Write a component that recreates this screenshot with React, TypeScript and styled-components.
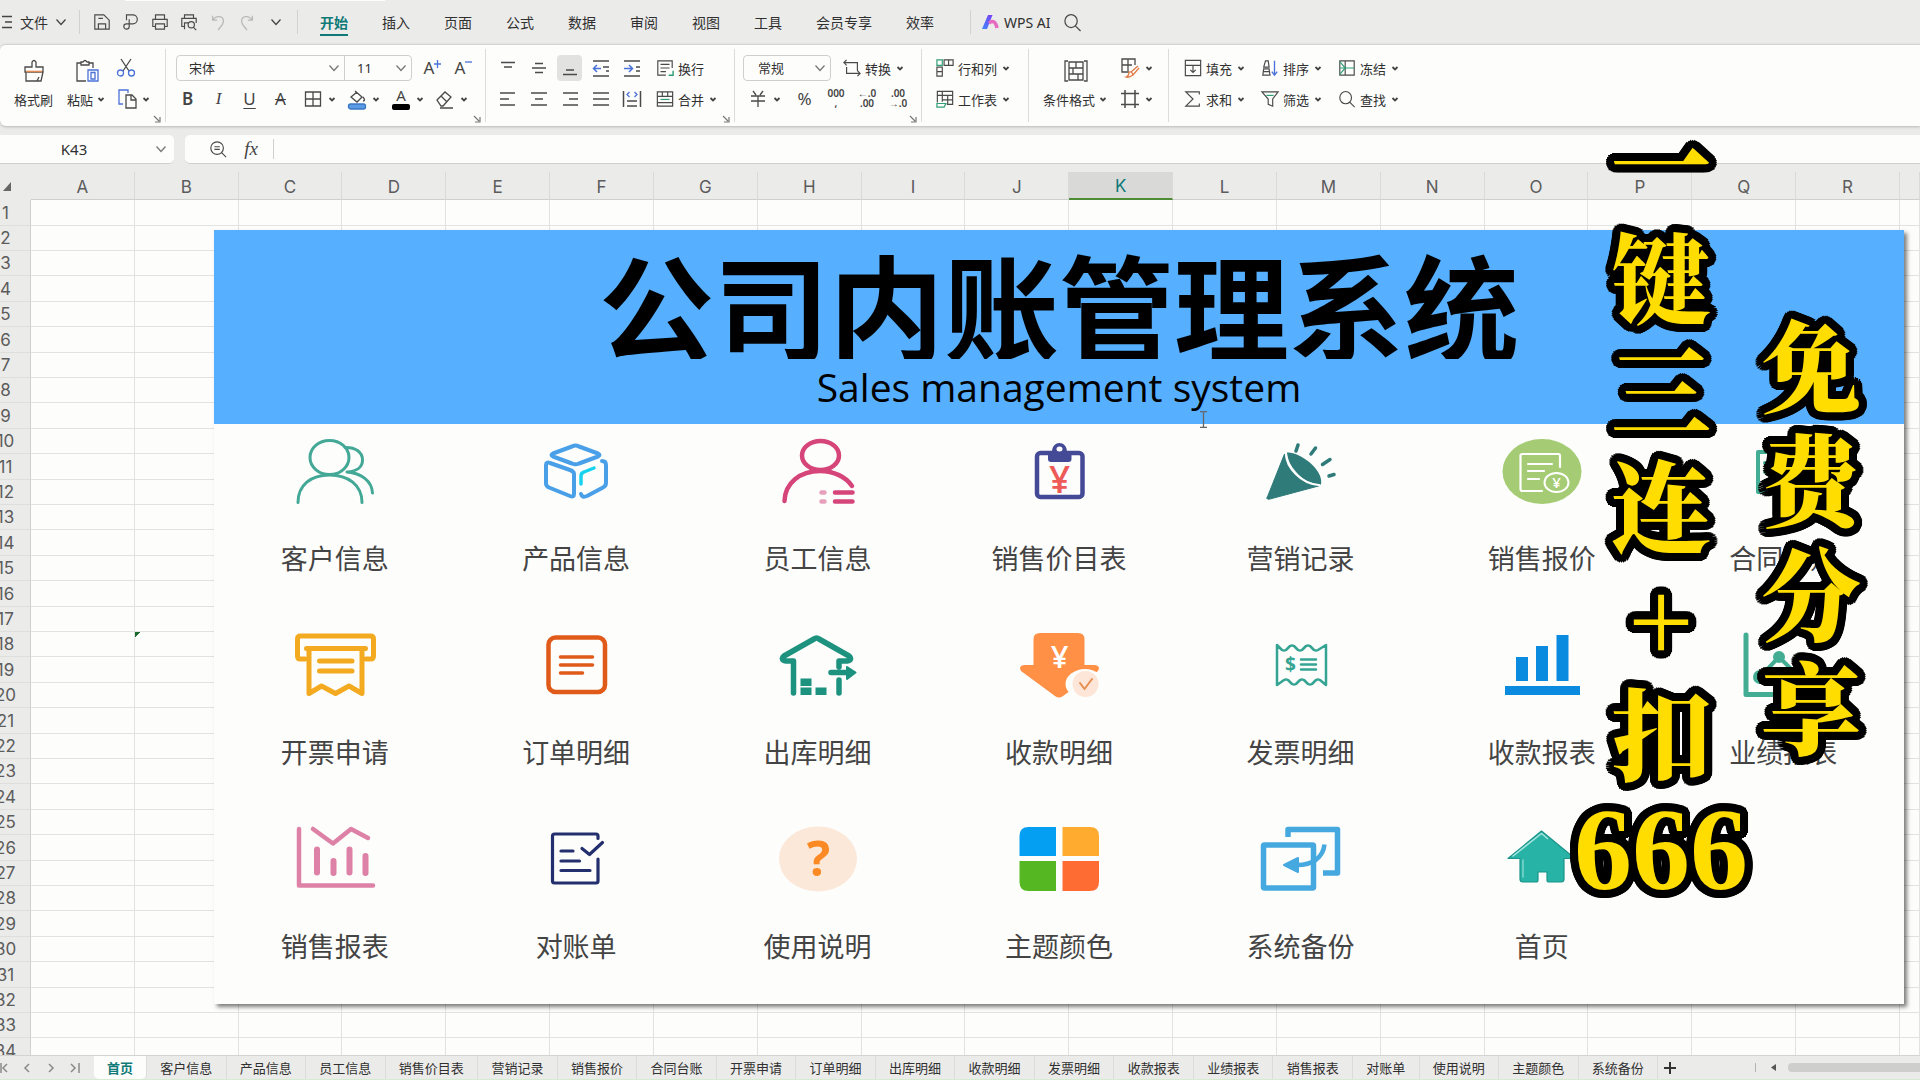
import React from "react";
import styled, { createGlobalStyle, css } from "styled-components";

const c = {
  chrome: "#ebebea",
  paper: "#fdfdfc",
  line: "#dcdcdb",
  ink: "#303030",
  soft: "#5c5c5c",
  teal: "#0f7a78",
  blue: "#4a72d8",
  banner: "#56b0ff",
};

const ui = '"Noto Sans", "Noto Sans CJK SC", sans-serif';

const Global = createGlobalStyle`
  *, *::before, *::after { box-sizing: border-box; }
  body { margin: 0; overflow: hidden; background: ${c.chrome}; color: ${c.ink}; font-family: ${ui}; font-size: 13px; }
  button, input, select { font: inherit; color: inherit; border: 0; background: none; padding: 0; margin: 0; outline: 0; }
  button { cursor: pointer; white-space: nowrap; }
  svg { display: block; flex: none; overflow: visible; }
`;

const Window = styled.div`
  position: relative;
  display: flex;
  flex-direction: column;
  height: 100vh;
  overflow: hidden;
`;

/* ---------- menu bar ---------- */
const MenuBar = styled.header`
  display: flex;
  align-items: center;
  height: 44px;
  position: relative;
  font-size: 14px;
`;
const DocTab = styled.div`
  position: absolute;
  top: 0;
  left: 125px;
  width: 260px;
  height: 1px;
  background: ${c.paper};
`;
const FileButton = styled.button`
  display: flex;
  align-items: center;
  gap: 7px;
  padding-left: 2px;
  width: 79px;
`;
const QuickBar = styled.div`
  display: flex;
  align-items: center;
  border: solid #d2d2d1;
  border-width: 0 1px;
  height: 24px;
  padding: 0 7px;
`;
const QuickButton = styled.button<{ $dim?: boolean }>`
  display: grid;
  place-items: center;
  width: 29px;
  color: ${(p) => (p.$dim ? "#b9b9b8" : "#4a4a4a")};
`;
const Menus = styled.nav`
  display: flex;
  gap: 34px;
  padding: 3px 36px 0 22px;
`;
const MenuLink = styled.a<{ $on?: boolean }>`
  color: ${(p) => (p.$on ? c.teal : c.ink)};
  font-weight: ${(p) => (p.$on ? 700 : 400)};
  line-height: 21px;
  padding-bottom: 1px;
  border-bottom: 2px solid ${(p) => (p.$on ? c.teal : "transparent")};
  text-decoration: none;
`;
const AiButton = styled.button`
  display: flex;
  align-items: center;
  gap: 5px;
  padding-left: 11px;
  border-left: 1px solid #d2d2d1;
  height: 24px;
  margin-right: 12px;
`;

/* ---------- ribbon ---------- */
const Ribbon = styled.section`
  display: flex;
  padding: 4px 0;
  height: 82px;
  background: ${c.paper};
  border-top: 1px solid #d4d4d3;
  border-radius: 6px 0 0 6px;
  box-shadow: 0 1px 3px rgba(0, 0, 0, 0.22);
`;
const Group = styled.div<{ $l: number; $r: number; $last?: boolean }>`
  position: relative;
  display: flex;
  padding: 6px ${(p) => p.$r}px 0 ${(p) => p.$l}px;
  border-right: ${(p) => (p.$last ? 0 : 1)}px solid ${c.line};
`;
const Rows = styled.div<{ $gap?: number }>`
  display: flex;
  flex-direction: column;
  gap: 5px;
  margin-left: ${(p) => p.$gap || 0}px;
`;
const Row = styled.div<{ $gap?: number; $inset?: number }>`
  display: flex;
  align-items: center;
  height: 26px;
  gap: ${(p) => p.$gap || 0}px;
  padding-left: ${(p) => p.$inset || 0}px;
`;
const IconButton = styled.button<{ $on?: boolean }>`
  display: flex;
  align-items: center;
  justify-content: center;
  width: 25px;
  height: 26px;
  margin: 0 3px;
  border-radius: 4px;
  background: ${(p) => (p.$on ? "#e2e2e1" : "none")};
`;
const DropButton = styled.button`
  display: flex;
  align-items: center;
  gap: 4px;
  width: 44px;
  height: 26px;
  padding-left: 7px;
`;
const TextButton = styled.button`
  display: flex;
  align-items: center;
  gap: 4px;
  height: 26px;
`;
const BigButton = styled.button<{ $gap?: number }>`
  display: flex;
  flex-direction: column;
  align-items: center;
  margin-left: ${(p) => p.$gap || 0}px;
`;
const BigIcon = styled.span`
  display: grid;
  place-items: center;
  height: 31px;
`;
const BigLabel = styled.span`
  display: flex;
  align-items: center;
  gap: 3px;
  height: 26px;
`;
const Combo = styled.div<{ $w: number }>`
  display: flex;
  align-items: center;
  width: ${(p) => p.$w}px;
  height: 26px;
  padding-right: 4px;
`;
const ComboFrame = styled.div`
  display: flex;
  border: 1px solid #cfcfce;
  border-radius: 4px;
  margin-right: 5px;
  ${Combo} { height: 24px; }
  ${Combo} + ${Combo} { border-left: 1px solid #cfcfce; }
`;
const Select = styled.select<{ $pad: number }>`
  appearance: none;
  flex: 1;
  min-width: 0;
  height: 24px;
  padding-left: ${(p) => p.$pad}px;
`;
const Letter = styled.span<{ $kind?: string }>`
  font-size: 17px;
  line-height: 20px;
  color: #444;
  ${(p) => p.$kind === "b" && css`font-weight: 600;`}
  ${(p) => p.$kind === "i" && css`font-style: italic; font-family: "Liberation Serif", serif;`}
  ${(p) => p.$kind === "u" && css`text-decoration: underline; text-underline-offset: 3px; text-decoration-thickness: 1px;`}
  ${(p) => p.$kind === "s" && css`text-decoration: line-through; text-decoration-thickness: 1px;`}
`;
const Launcher = styled.button`
  position: absolute;
  right: 4px;
  bottom: -1px;
  color: #777;
`;

/* ---------- formula bar ---------- */
const FormulaRow = styled.div`
  display: flex;
  gap: 11px;
  padding-top: 9px;
  height: 46px;
`;
const NameBox = styled.label`
  display: flex;
  align-items: center;
  gap: 7px;
  width: 174px;
  height: 29px;
  background: ${c.paper};
  border-bottom: 1px solid #cfcfce;
  border-radius: 0 5px 5px 0;
  font-size: 15px;
  input { width: 148px; text-align: center; }
`;
const FormulaBox = styled.label`
  display: flex;
  align-items: center;
  flex: 1;
  height: 29px;
  padding-left: 24px;
  background: ${c.paper};
  border-bottom: 1px solid #cfcfce;
  border-radius: 5px 0 0 5px;
  input { flex: 1; margin-left: 10px; height: 20px; border-left: 1px solid #d0d0cf; padding-left: 8px; }
`;
const Fx = styled.i`
  width: 24px;
  margin-left: 12px;
  text-align: center;
  font: italic 19px/24px "Liberation Serif", serif;
  color: #444;
`;

/* ---------- sheet ---------- */
const SheetArea = styled.main`
  position: relative;
  flex: 1;
  min-height: 0;
  overflow: hidden;
`;
const Scroller = styled.div`
  margin-left: -19px;
`;
const Grid = styled.table`
  width: 100%;
  table-layout: fixed;
  border-collapse: separate;
  border-spacing: 0;
  font: 400 17px/24px Inter, sans-serif;
  color: ${c.soft};
  th { font-weight: 400; padding: 0; background: ${c.chrome}; }
  td { padding: 0; background: ${c.paper}; border: solid #e2e2e1; border-width: 0 1px 1px 0; }
  tbody th { border-right: 1px solid #d0d0cf; border-bottom: 1px solid #dededd; }
  tbody tr { height: 25px; }
  tbody tr:nth-child(5n + 1), tbody tr:nth-child(5n + 4) { height: 26px; }
`;
const RowHeadCol = styled.col` width: 50px; `;
const EdgeCol = styled.col` width: 20px; `;
const ColHead = styled.th<{ $on?: boolean }>`
  && {
    height: 28px;
    padding-top: 2px;
    border-right: 1px solid #dadad9;
    border-bottom: ${(p) => (p.$on ? "2px solid #4d8b35" : "1px solid #cfcfce")};
    background: ${(p) => (p.$on ? "#d9d9d8" : c.chrome)};
    color: ${(p) => (p.$on ? c.teal : c.soft)};
  }
`;
const Corner = styled.th`
  && { text-align: left; border-bottom: 0; }
  svg { margin-left: 22px; }
`;
const FlagCell = styled.td`
  && { background: linear-gradient(135deg, #1d6b2c 4px, transparent 4px) ${c.paper}; }
`;

/* ---------- dashboard object lying on the sheet ---------- */
const Board = styled.section`
  position: absolute;
  top: 58px;
  left: 214px;
  right: 16px;
  background: ${c.paper};
  box-shadow: 3px 3px 4px rgba(0, 0, 0, 0.5);
`;
const Banner = styled.header`
  height: 194px;
  background: ${c.banner};
  color: #000;
  text-align: center;
`;
const Title = styled.h1`
  margin: 0;
  height: 129px;
  overflow: hidden;
  font: 700 115px/146px "Noto Sans CJK SC", sans-serif;
`;
const Subtitle = styled.p`
  margin: 0;
  font: 400 39px/56px "Open Sans", "Noto Sans", sans-serif;
`;
const Tiles = styled.div`
  display: grid;
  grid-template-columns: repeat(7, 1fr);
  row-gap: 57px;
  padding: 15px 0 40px;
`;
const Tile = styled.button`
  display: flex;
  flex-direction: column;
  align-items: center;
  gap: 36px;
  font: 400 27px/36px "Noto Sans CJK SC", sans-serif;
  color: #444;
`;
const Pointer = styled.svg`
  position: absolute;
  left: 1199px;
  top: 239px;
`;

/* ---------- sheet tabs ---------- */
const TabBar = styled.footer`
  display: flex;
  height: 25px;
  border-top: 1px solid #d3d3d2;
  border-bottom: 1px solid #d6ecd0;
  background: ${c.chrome};
`;
const TabNav = styled.div`
  display: flex;
  align-items: center;
  justify-content: space-between;
  width: 94px;
  padding-right: 14px;
  color: #8a8a8a;
`;
const Tabs = styled.nav`
  display: flex;
  flex: 1;
`;
const SheetTab = styled.button<{ $on?: boolean }>`
  flex: 1 1 auto;
  padding: 0 13px;
  border-right: 1px solid ${c.line};
  line-height: 22px;
  ${(p) => p.$on && css`
    flex: 0 0 auto;
    background: ${c.paper};
    color: ${c.teal};
    font-weight: 700;
    border-radius: 0 0 5px 5px;
  `}
`;
const TabTail = styled.div`
  display: flex;
  align-items: center;
  width: 262px;
  padding-left: 6px;
`;
const Track = styled.div`
  display: flex;
  align-items: center;
  gap: 12px;
  margin-left: auto;
  padding-left: 15px;
  border-left: 1px solid #b5b5b4;
  height: 9px;
`;
const Thumb = styled.div`
  width: 132px;
  height: 9px;
  background: #cececd;
  border-radius: 4px 0 0 4px;
`;

/* ---------- video captions ---------- */
const Captions = styled.aside`
  position: absolute;
  top: 103px;
  right: 56px;
  display: flex;
  gap: 7px;
  pointer-events: none;
`;
const outline = Array.from({ length: 32 }, (_, i) => {
  const a = (i * Math.PI) / 16;
  return `${Math.round(Math.cos(a) * 8)}px ${Math.round(Math.sin(a) * 8)}px 0 #000`;
}).join(", ");
const Caption = styled.div<{ $w: number; $drop?: number }>`
  width: ${(p) => p.$w}px;
  padding-top: ${(p) => p.$drop || 0}px;
  text-align: center;
  color: #ffdd00;
  font: 900 100px/114px "Noto Serif CJK SC", "Noto Sans CJK SC", serif;
  text-shadow: ${outline};
`;
const Glyph = styled.div``;
const Digits = styled.div`
  padding-top: 6px;
  font-family: "Liberation Serif", serif;
  font-size: 116px;
  font-weight: 700;
`;

/* ---------- icons ---------- */
type Kids = { children: React.ReactNode };
const I = ({ s = 20, children }: Kids & { s?: number }) => (
  <svg width={s} height={s} viewBox="0 0 20 20" fill="none" stroke="#4a4a4a" strokeWidth="1.3">{children}</svg>
);
const Caret = () => (
  <svg width="10" height="10" viewBox="0 0 10 10" fill="none" stroke="#444" strokeWidth="1.8"><path d="M2.500 4l2.500 2.500L7.500 4" /></svg>
);
const Chevron = ({ color = "#777" }: { color?: string }) => (
  <svg width="12" height="12" viewBox="0 0 12 12" fill="none" stroke={color} strokeWidth="1.3"><path d="M1.500 3.500L6 8.500l4.500-5" /></svg>
);
const Launch = () => (
  <Launcher aria-label="更多设置">
    <svg width="8" height="8" viewBox="0 0 8 8" fill="none" stroke="currentColor" strokeWidth="1.2"><path d="M1 1l5 5M7 2v5H2" /></svg>
  </Launcher>
);
const Lines = ({ d }: { d: string }) => <I><path d={d} strokeWidth="1.5" /></I>;
const Lens = ({ s = 20 }: { s?: number }) => <I s={s}><ellipse cx="8.500" cy="8.500" rx="6.500" ry="6.800" /><path d="M13 13.500l5.500 5.500" /></I>;

const quick: [string, React.ReactNode, boolean?][] = [
  ["保存", <I key="a" s={18}><path d="M2 18V2h10l6 6v10zM6 18v-6h8v6M6 6h5" /></I>],
  ["输出", <I key="b" s={18}><path d="M5 8V2h7a5 5 0 010 10H8v3a3 3 0 11-3-3h3V7" /></I>],
  ["打印", <I key="c" s={18}><path d="M5 7V2h10v5M5 15H2V7h16v8h-3M5 12h10v6H5z" /></I>],
  ["打印预览", <I key="d" s={18}><path d="M5 6V2h10v4M5 15H2V6h16v5M5 18v-7h4" /><circle cx="12.500" cy="13" r="3.500" /><path d="M15 16l3 3" /></I>],
  ["撤销", <svg key="e" width="18" height="18" viewBox="0 0 20 20" fill="none" stroke="currentColor" strokeWidth="1.4"><path d="M4 3v5h5M4 8c4-6 12-5 12 1 0 4-3 6-6 10" /></svg>, true],
  ["恢复", <svg key="f" width="18" height="18" viewBox="0 0 20 20" fill="none" stroke="currentColor" strokeWidth="1.4"><path d="M16 3v5h-5M16 8C12 2 4 3 4 9c0 4 3 6 6 10" /></svg>, true],
  ["自定义", <Chevron key="g" color="#444" />],
];
const menus = ["开始", "插入", "页面", "公式", "数据", "审阅", "视图", "工具", "会员专享", "效率"];

const alignTop: [string, React.ReactNode][] = [
  ["顶端对齐", <Lines key="1" d="M3 4.500h14M6 9h8" />],
  ["垂直居中", <Lines key="2" d="M6 5.500h8M3 10h14M6 14.500h8" />],
  ["底端对齐", <Lines key="3" d="M6 12h8M3 16.500h14" />],
  ["减少缩进", <I key="4"><path d="M2 3h16M12 9h6M15 13h3M2 18h16" strokeWidth="1.5" /><path d="M10 10.500H3M6 7l-3.500 3.500L6 14" stroke={c.blue} strokeWidth="1.5" /></I>],
  ["增加缩进", <I key="5"><path d="M2 3h16M14 9h4M14 13h4M2 18h16" strokeWidth="1.5" /><path d="M2 10.500h8M7 7l3.500 3.500L7 14" stroke={c.blue} strokeWidth="1.5" /></I>],
];
const alignBottom: [string, React.ReactNode][] = [
  ["左对齐", <Lines key="1" d="M2 4h15M2 10h9M2 16h15" />],
  ["居中", <Lines key="2" d="M2 4h16M6 10h8M2 16h16" />],
  ["右对齐", <Lines key="3" d="M3 4h15M9 10h9M3 16h15" />],
  ["两端对齐", <Lines key="4" d="M2 4h16M2 10h16M2 16h16" />],
  ["分散对齐", <I key="5"><path d="M1.500 2v16M18.500 2v16M5 12h10M5 17h10" strokeWidth="1.500" /><path d="M7.500 3L5 5.500 7.500 8M12.500 3L15 5.500 12.500 8" stroke={c.blue} /></I>],
];

const Art = ({ children }: Kids) => (
  <svg width="80" height="65" viewBox="0 0 80 65" fill="none" strokeLinecap="round" strokeLinejoin="round">{children}</svg>
);
const Yen = ({ x, y, s, f }: { x: number; y: number; s: number; f: string }) => (
  <text x={x} y={y} fontSize={s} fill={f} textAnchor="middle" fontFamily="Open Sans, sans-serif" fontWeight="600">¥</text>
);

const tiles: [string, React.ReactNode][] = [
  ["客户信息", <g key="1" stroke="#43a895" strokeWidth="3"><ellipse cx="34.500" cy="18.500" rx="19.500" ry="17" /><path d="M3 63.500C3 46 16 36 34.500 36S67 46 67 63.500M50 8.500c10-.5 17.500 4.500 17.500 12.500S62 32 52 33c14 1 25 9 25.500 21" /></g>],
  ["产品信息", <g key="2" stroke="#4aa0e8" strokeWidth="4"><path d="M36 7.500q3.500-2 7 0l19 7q3 1.500 0 3l-19 7q-3.500 1.500-7 0l-19-7q-3-1.500 0-3zM14 24l20 7q4 1.500 4 4v20q0 3.500-4 2L13 48.500q-3-1.500-3-4V26q0-3.500 4-2zM66 22q4 0 4 4v18q0 3-3 4.500l-16 8.500q-5 2-6-2" /><path d="M45 45V37q0-3 3-4l10-4" stroke="#19d3ee" strokeWidth="3.500" /></g>],
  ["员工信息", <g key="3" stroke="#d6457a" strokeWidth="4.500"><ellipse cx="42.500" cy="16.500" rx="18.500" ry="14.500" /><path d="M6.500 62C7 44 22 32 42 32c14 0 26 6 32 15M57 53.500h17.500M57 62.500h17.500" /><path d="M43.500 53.500h3M43.500 62.500h3" stroke="#e6a0bb" /></g>],
  ["销售价目表", <g key="4"><rect x="18" y="14" width="45.500" height="44" rx="3.500" stroke="#454a96" strokeWidth="4.500" /><path d="M29 13h4c0-12 15-12 15 0h4.500v7q0 3-3 3H32q-3 0-3-3z" fill="#454a96" /><ellipse cx="40.500" cy="10" rx="3" ry="2.500" fill="#fff" /><Yen x={40.500} y={54} s={37} f="#ee5a57" /></g>],
  ["营销记录", <g key="5"><path d="M7 59L24.500 15c2 14 16 30 34 32L10 60q-3 1-3-1z" fill="#2e7b7a" stroke="#2e7b7a" /><path d="M27 13.500C37 12 64 29 61 45.500 45 46 28 29 27 13.500z" fill="#2e7b7a" /><path d="M26 15c0 13 15 30 33 31" stroke="#fff" strokeWidth="2" /><path d="M38 6l-2 6M55.500 9l-4.500 6M70 20.500l-7.500 5M74 35.500l-5 1.500" stroke="#2e7b7a" strokeWidth="3.500" /></g>],
  ["销售报价", <g key="6"><ellipse cx="40" cy="32.500" rx="39.500" ry="32.500" fill="#a5cc74" /><path d="M58 28V16.500q0-1.500-1.500-1.500h-36q-2 0-2 1.500V50q0 2 2 2H40M26 25h24M26 32h16M26 40h11" stroke="#fff" strokeWidth="2.200" /><ellipse cx="54.500" cy="43.500" rx="12" ry="9.500" stroke="#fff" strokeWidth="2" /><Yen x={54.500} y={49} s={15} f="#fff" /></g>],
  ["合同台账", <g key="7" stroke="#43ad93" strokeWidth="4"><rect x="15" y="13" width="46" height="40" /><path d="M22 24h30M22 33h30M22 42h20" /></g>],
  ["开票申请", <g key="8" stroke="#f3aa20" strokeWidth="5"><path d="M10 26H5.500q-3 0-3-3V6q0-3 3-3h70q3 0 3 3v17q0 3-3 3H71M11.500 15.500h59M14 16v44.500l12.500-7.500 14 7.500L54 53l13 7.500V16M24.500 28H57M24.500 38H57" /></g>],
  ["订单明细", <g key="9" stroke="#e05a1a" strokeWidth="4.500"><rect x="12.500" y="4.500" width="56.500" height="54.500" rx="7" /><path d="M24.500 24h32M24.500 32h32M24.500 40h22" strokeWidth="3.500" /></g>],
  ["出库明细", <g key="10" stroke="#1d927e" strokeWidth="5.500"><path d="M15.500 60V28H8q-6-1-2-5L36 6q2.500-2 5 0l30 17q4 4-2 5h-8v6M61 47v13M53 39.500h16" /><path d="M69 34l8.500 5.500L69 46z" fill="#1d927e" strokeWidth="2" /><path d="M22.500 45.500h11v7.500h-11zM22.500 54.500h11v7.500h-11zM37.500 54.500h11v7.500h-11z" fill="#1d927e" stroke="none" /></g>],
  ["收款明细", <g key="11"><path d="M21 0h38q6.500 0 6.500 6v26H76q6 1 3 6L44 63q-4 3-8 0L2 38q-3-5 3-6h9.500V6q0-6 6.500-6z" fill="#ff9045" /><ellipse cx="66" cy="51" rx="19.500" ry="15" fill={c.paper} /><ellipse cx="66.500" cy="51" rx="13" ry="13" fill="#fde6d8" /><path d="M61 50l4.500 6 7.500-10" stroke="#e58e50" strokeWidth="2" /><Yen x={40.500} y={35} s={31} f="#fff" /></g>],
  ["发票明细", <g key="12" stroke="#36a493" strokeWidth="2.500"><path d="M17 52V12l5 5q2 1 4 0l4-4q2-1 4 0l4 4q2 1 4 0l4-4q2-1 4 0l4 4q2 1 4 0l8-5v40l-6-5q-2-1-4 0l-4 4q-2 1-4 0l-4-4q-2-1-4 0l-4 4q-2 1-4 0l-4-4q-2-1-4 0z" /><path d="M41 26.500h15M41 31.500h15M41 36.500h15" /><text x="30.500" y="38" fontSize="19" textAnchor="middle" fill="#36a493" stroke="none" fontFamily="Open Sans, sans-serif" fontWeight="700">$</text></g>],
  ["收款报表", <path key="13" d="M14 24h12v24H14zM34 13h12v35H34zM54.500 2h12v46h-12zM3 53h75v9H3z" fill="#0b8be0" />],
  ["业绩报表", <g key="14" stroke="#43ad93" strokeWidth="4"><path d="M3 2v59.500h72" strokeWidth="5" /><path d="M17 44l19-20 14 14" /><g fill="#43ad93"><circle cx="17" cy="44" r="5" /><circle cx="36" cy="24" r="4" /></g></g>],
  ["销售报表", <g key="15" stroke="#dd82a6" strokeWidth="4.500"><path d="M4 2v56.500h74M18 2l20 14.500L56 2l17 9" /><path d="M22 22.500v23M38.500 34v12M54.500 22.500v23M70.500 29v17" strokeWidth="6" /></g>],
  ["对账单", <g key="16" stroke="#24306e" strokeWidth="3.200"><path d="M62 11.500V9q0-2-2-2H18.500q-2 0-2 2v45q0 2 2 2H60q2 0 2-2V32M25 24h12M25 34h18.500M25 43.500h29M46 21.500l7.500 6 13-12" /></g>],
  ["使用说明", <g key="17"><ellipse cx="40" cy="32" rx="39" ry="32.500" fill="#fce8d8" /><text x="40.500" y="49" fontSize="49" textAnchor="middle" fill="#fb8a24" fontFamily="Noto Sans, sans-serif" fontWeight="700">?</text></g>],
  ["主题颜色", <g key="18"><path d="M37 0v29H.5V9q0-9 9-9z" fill="#049ff3" /><path d="M43.500 0v29H80V9q0-9-9-9z" fill="#feab30" /><path d="M37 64V34H.5v21q0 9 9 9z" fill="#55b722" /><path d="M43.500 64V34H80v21q0 9-9 9z" fill="#ff6c33" /></g>],
  ["系统备份", <g key="19" stroke="#45a9df" strokeWidth="5.500" strokeLinecap="butt"><rect x="3.500" y="18" width="50" height="43" rx="1" /><path d="M28 10V2.500h49.500V46H63" /><path d="M64.500 17.500C63 31 52 38 37 38" strokeWidth="4.500" /><path d="M24 38l14-7v14z" fill="#45a9df" strokeWidth="2" /></g>],
  ["首页", <g key="20"><path d="M39.500 4L73 31.500H62V52q0 3-3 3H47q-2 0-2-2v-8h-9v8q0 2-2 2H21q-3 0-3-3V31.500H6z" fill="#27b3a5" stroke="#1b948b" strokeWidth="1.200" /><path d="M11 29L39.500 6.500l6 5" stroke="#a8e6df" strokeWidth="1.500" /><path d="M21 33v17" stroke="#7fd6cd" strokeWidth="1.500" /></g>],
];

const cols = "ABCDEFGHIJKLMNOPQR".split("");
const rowNumbers = Array.from({ length: 34 }, (_, i) => i + 1);
const sheets = ["首页", ...tiles.map(([t]) => t).filter((t) => t !== "首页")];

const Drop = ({ label, children }: Kids & { label: string }) => (
  <DropButton aria-label={label}>{children}<Caret /></DropButton>
);
const Labelled = ({ text, plain, children }: Kids & { text: string; plain?: boolean }) => (
  <TextButton>{children}<span>{text}</span>{!plain && <Caret />}</TextButton>
);
const Tiny = ({ a, b }: { a: string; b: string }) => (
  <svg width="20" height="20" viewBox="0 0 20 20" fontSize="10" fontWeight="600" fill="#444" textAnchor="middle" fontFamily="Noto Sans, sans-serif">
    <text x="10" y="8">{a}</text><text x="10" y="18">{b}</text>
  </svg>
);

export default function App() {
  return (
    <Window>
      <Global />
      <MenuBar>
        <DocTab />
        <FileButton>
          <svg width="11" height="14" fill="none" stroke="#444" strokeWidth="1.300"><path d="M0 1.500h10M3 7h7M0 12.500h10" /></svg>
          <span>文件</span>
          <Chevron color="#444" />
        </FileButton>
        <QuickBar>
          {quick.map(([name, icon, dim]) => <QuickButton key={name} aria-label={name} $dim={dim}>{icon}</QuickButton>)}
        </QuickBar>
        <Menus>
          {menus.map((m, i) => <MenuLink key={m} href="#" $on={i === 0}>{m}</MenuLink>)}
        </Menus>
        <AiButton>
          <svg width="17" height="14" viewBox="0 0 17 14" fill="none" strokeWidth="3.500">
            <defs>
              <linearGradient id="ai" x1="0" y1="1" x2="1" y2="0"><stop stopColor="#3d8bff" /><stop offset="1" stopColor="#7a3df0" /></linearGradient>
            </defs>
            <path d="M0 14L6 0h4.500L5 14z" fill="url(#ai)" /><path d="M7 8c4-3 7-1 8 5" stroke="#e56ac0" />
          </svg>
          WPS AI
        </AiButton>
        <Lens s={19} />
      </MenuBar>

      <Ribbon>
        <Group $l={14} $r={11}>
          <BigButton>
            <BigIcon><svg width="24" height="24" viewBox="0 0 24 24" fill="none" stroke="#4a4a4a" strokeWidth="1.300"><path d="M10 8V3q2-3 4 0v5h7v5H3V8zM4 13v9h15l2-9M15 22l2-4" /><path d="M4 12.500h16" stroke="#e08a55" strokeWidth="1.600" /></svg></BigIcon>
            <BigLabel>格式刷</BigLabel>
          </BigButton>
          <BigButton $gap={14}>
            <BigIcon><svg width="24" height="24" viewBox="0 0 24 24" fill="none" stroke="#4a4a4a" strokeWidth="1.300"><path d="M6 4H2v18h9M14 4h4v5M6 6V3h2q2-3 4 0h2v3z" /><path d="M13 11h10v11H13zM16 13.500h4V20h-4z" stroke={c.blue} /></svg></BigIcon>
            <BigLabel>粘贴<Caret /></BigLabel>
          </BigButton>
          <Rows $gap={4}>
            <Row><IconButton aria-label="剪切"><I><path d="M5 1l8 12M15 1L7 13" /><g stroke={c.blue}><circle cx="4.500" cy="15" r="3" /><circle cx="15.500" cy="15" r="3" /></g></I></IconButton></Row>
            <Row><Drop label="复制"><I><path d="M6 15H2V1h9v3" stroke={c.blue} /><path d="M9 6h6l4 4v9H9zM14 6v5h5" /></I></Drop></Row>
          </Rows>
          <Launch />
        </Group>

        <Group $l={6} $r={6}>
          <Rows>
            <Row $inset={4}>
              <ComboFrame>
                <Combo $w={167}><Select aria-label="字体" $pad={12}><option>宋体</option></Select><Chevron /></Combo>
                <Combo $w={67}><Select aria-label="字号" $pad={12}><option>11</option></Select><Chevron /></Combo>
              </ComboFrame>
              <IconButton aria-label="增大字号"><Letter>A</Letter><svg width="7" height="16" stroke={c.blue} strokeWidth="1.300"><path d="M0 4h7M3.500 0v8" /></svg></IconButton>
              <IconButton aria-label="减小字号"><Letter>A</Letter><svg width="7" height="16" stroke={c.blue} strokeWidth="1.300"><path d="M0 2h7" /></svg></IconButton>
            </Row>
            <Row>
              <IconButton aria-label="加粗"><Letter $kind="b">B</Letter></IconButton>
              <IconButton aria-label="倾斜"><Letter $kind="i">I</Letter></IconButton>
              <IconButton aria-label="下划线"><Letter $kind="u">U</Letter></IconButton>
              <IconButton aria-label="删除线"><Letter $kind="s">A</Letter></IconButton>
              <Drop label="边框"><I><path d="M2.500 3h15v14h-15zM10 3v14M2.500 10h15" /></I></Drop>
              <Drop label="填充颜色"><I><path d="M8 2l7 6-5 5-6-5 6-5M16 8q3 4 0 4" /><rect x="1.500" y="15" width="17" height="5" rx="2" fill="#5b9be6" stroke="#3c78c2" /></I></Drop>
              <Drop label="字体颜色"><svg width="20" height="20" viewBox="0 0 20 20"><text x="10" y="12" fontSize="15" textAnchor="middle" fill="#444" fontFamily="Noto Sans, sans-serif">A</text><rect x="1" y="15" width="18" height="6" rx="2" fill="#000" /></svg></Drop>
              <Drop label="清除"><I><path d="M2 11l8-8 6 5-8 9H6zM6 7l6 6M5 19h13" /></I></Drop>
            </Row>
          </Rows>
          <Launch />
        </Group>

        <Group $l={6} $r={16}>
          <Rows>
            <Row>{alignTop.map(([n, i], k) => <IconButton key={n} aria-label={n} $on={k === 2}>{i}</IconButton>)}</Row>
            <Row>{alignBottom.map(([n, i]) => <IconButton key={n} aria-label={n}>{i}</IconButton>)}</Row>
          </Rows>
          <Rows $gap={9}>
            <Labelled text="换行" plain><I s={18}><path d="M18 10V2H2v16h9M5 6h10M5 10h10M5 14h6" /><path d="M19 13v5h-5" stroke="#2f9e78" strokeWidth="1.600" /></I></Labelled>
            <Labelled text="合并"><I s={18}><path d="M1.500 2h17v16h-17zM1.500 7h17M1.500 14h17M7 2v5M13 2v5" /><path d="M5 10.500h10" stroke="#2f9e78" /></I></Labelled>
          </Rows>
          <Launch />
        </Group>

        <Group $l={6} $r={8}>
          <Rows>
            <Row $inset={2} $gap={7}>
              <ComboFrame><Combo $w={86}><Select aria-label="数字格式" $pad={14}><option>常规</option></Select><Chevron /></Combo></ComboFrame>
              <Labelled text="转换"><I s={18}><path d="M4 1L1 4l3 3M1 4h15v9M4 9v7h15M16 13l3 3-3 3" /></I></Labelled>
            </Row>
            <Row>
              <Drop label="货币"><I><path d="M5 2l3 4M15 2l-3 4M3 7h14M3 12h14M10 7v11" /></I></Drop>
              <Row $inset={4}>
                <IconButton aria-label="百分比"><Letter>%</Letter></IconButton>
                <IconButton aria-label="千位分隔"><Tiny a="000" b="," /></IconButton>
                <IconButton aria-label="增加小数"><Tiny a="←.0" b=".00" /></IconButton>
                <IconButton aria-label="减少小数"><Tiny a=".00" b="→.0" /></IconButton>
              </Row>
            </Row>
          </Rows>
          <Launch />
        </Group>

        <Group $l={14} $r={17}>
          <Rows>
            <Labelled text="行和列"><I s={18}><path d="M9 1h10v6H9zM14 1v6M1 9h6v10H1zM1 14h6" /><path d="M1 1h6v6H1z" stroke="#2f9e78" /></I></Labelled>
            <Labelled text="工作表"><I s={18}><path d="M1.500 14V1.500h17V16H12M1.500 6h17M7 1.500V13M13 6v10M7 11h11" /><path d="M1 15h10l-2 4H1z" stroke="#2f9e78" /></I></Labelled>
          </Rows>
        </Group>

        <Group $l={14} $r={11}>
          <BigButton>
            <BigIcon><svg width="24" height="24" viewBox="0 0 24 24" fill="none" stroke="#4a4a4a" strokeWidth="1.300"><path d="M4 2H1v20h3M20 2h3v20h-3M5 3h14v18H5zM5 9h14M5 15h14M12 3v6M9 9v6M14 15v6" /></svg></BigIcon>
            <BigLabel>条件格式<Caret /></BigLabel>
          </BigButton>
          <Rows $gap={5}>
            <Row><Drop label="表格样式"><I><path d="M9 14H2V1h13v6M2 7h10M8 1v12" /><path d="M18 8l-7 6M19 10l-6 7q-4 3-7 2 3-1 3-5 3-1 4 3" stroke="#e07b45" /></I></Drop></Row>
            <Row><Drop label="单元格"><I><path d="M5 1v18M15 1v18M1 4.500h18M1 15.500h18" strokeWidth="1.500" /></I></Drop></Row>
          </Rows>
        </Group>

        <Group $l={15} $r={0} $last>
          <Rows>
            <Row $gap={15}>
              <Labelled text="填充"><I s={18}><path d="M1.500 1.500h17v17h-17zM1.500 7h17M10 7v8M7 12l3 3 3-3" /></I></Labelled>
              <Labelled text="排序"><I s={18}><path d="M2 18l1-7h6l1 7zM3 9l2-7h3l1 7zM3 14h6" /><path d="M15 2v16M12 14l3 4 3-4" stroke={c.blue} strokeWidth="1.500" /></I></Labelled>
              <Labelled text="冻结"><I s={18}><path d="M2 2h16v16H2zM8 2v16" /><path d="M2 10h16M2 3l6 7-6 7" stroke="#2f9e78" /></I></Labelled>
            </Row>
            <Row $gap={15}>
              <Labelled text="求和"><I s={18}><path d="M17 5V2H2l8 8-8 8h15v-3" /></I></Labelled>
              <Labelled text="筛选"><I s={18}><path d="M1 2h18l-6 8v8l-5-2v-6z" /><path d="M6 6h8" stroke="#2f9e78" /></I></Labelled>
              <Labelled text="查找"><Lens s={18} /></Labelled>
            </Row>
          </Rows>
        </Group>
      </Ribbon>

      <FormulaRow>
        <NameBox><input aria-label="名称框" defaultValue="K43" /><Chevron /></NameBox>
        <FormulaBox>
          <I s={18}><circle cx="9" cy="9" r="7" /><path d="M14 14l5 5M6 7.500h6M6 10.500h6" /></I>
          <Fx>fx</Fx>
          <input aria-label="编辑栏" />
        </FormulaBox>
      </FormulaRow>

      <SheetArea>
        <Scroller>
          <Grid>
            <colgroup><RowHeadCol />{cols.map((k) => <col key={k} />)}<EdgeCol /></colgroup>
            <thead>
              <tr>
                <Corner aria-label="全选"><svg width="8" height="9"><path d="M8 0v9H0z" fill="#666" /></svg></Corner>
                {cols.map((k) => <ColHead key={k} $on={k === "K"}>{k}</ColHead>)}
                <ColHead />
              </tr>
            </thead>
            <tbody>
              {rowNumbers.map((n) => (
                <tr key={n}>
                  <th>{n}</th>
                  {cols.map((k) => (n === 18 && k === "B" ? <FlagCell key={k} /> : <td key={k} />))}
                  <td />
                </tr>
              ))}
            </tbody>
          </Grid>
        </Scroller>

        <Board>
          <Banner>
            <Title>公司内账管理系统</Title>
            <Subtitle>Sales management system</Subtitle>
          </Banner>
          <Tiles>
            {tiles.map(([label, art]) => <Tile key={label}><Art>{art}</Art>{label}</Tile>)}
          </Tiles>
        </Board>
        <Pointer width="9" height="17" viewBox="0 0 9 17" fill="none" stroke="#666" strokeWidth="1.300">
          <path d="M1 .7h2.500q1 0 1 1v13.600q0 1-1 1H1M8 .7H5.500q-1 0-1 1M8 16.300H5.500q-1 0-1-1" />
        </Pointer>
      </SheetArea>

      <TabBar>
        <TabNav>
          <svg width="8" height="10" fill="none" stroke="currentColor" strokeWidth="1.500"><path d="M1 0v10M7 1L3 5l4 4" /></svg>
          <svg width="8" height="10" fill="none" stroke="currentColor" strokeWidth="1.500"><path d="M6 1L2 5l4 4" /></svg>
          <svg width="8" height="10" fill="none" stroke="currentColor" strokeWidth="1.500"><path d="M2 1l4 4-4 4" /></svg>
          <svg width="10" height="10" fill="none" stroke="currentColor" strokeWidth="1.500"><path d="M1 1l4 4-4 4M9 0v10" /></svg>
        </TabNav>
        <Tabs>{sheets.map((s, i) => <SheetTab key={s} $on={i === 0}>{s}</SheetTab>)}</Tabs>
        <TabTail>
          <button aria-label="新建工作表"><svg width="12" height="12" stroke="#333" strokeWidth="2"><path d="M0 6h12M6 0v12" /></svg></button>
          <Track>
            <svg width="5" height="7"><path d="M5 0v7L0 3.500z" fill="#555" /></svg>
            <Thumb />
          </Track>
        </TabTail>
      </TabBar>

      <Captions>
        <Caption $w={180}>
          {"一键三连+扣".split("").map((g) => <Glyph key={g}>{g}</Glyph>)}
          <Digits>666</Digits>
        </Caption>
        <Caption $w={106} $drop={202}>
          {"免费分享".split("").map((g) => <Glyph key={g}>{g}</Glyph>)}
        </Caption>
      </Captions>
    </Window>
  );
}
